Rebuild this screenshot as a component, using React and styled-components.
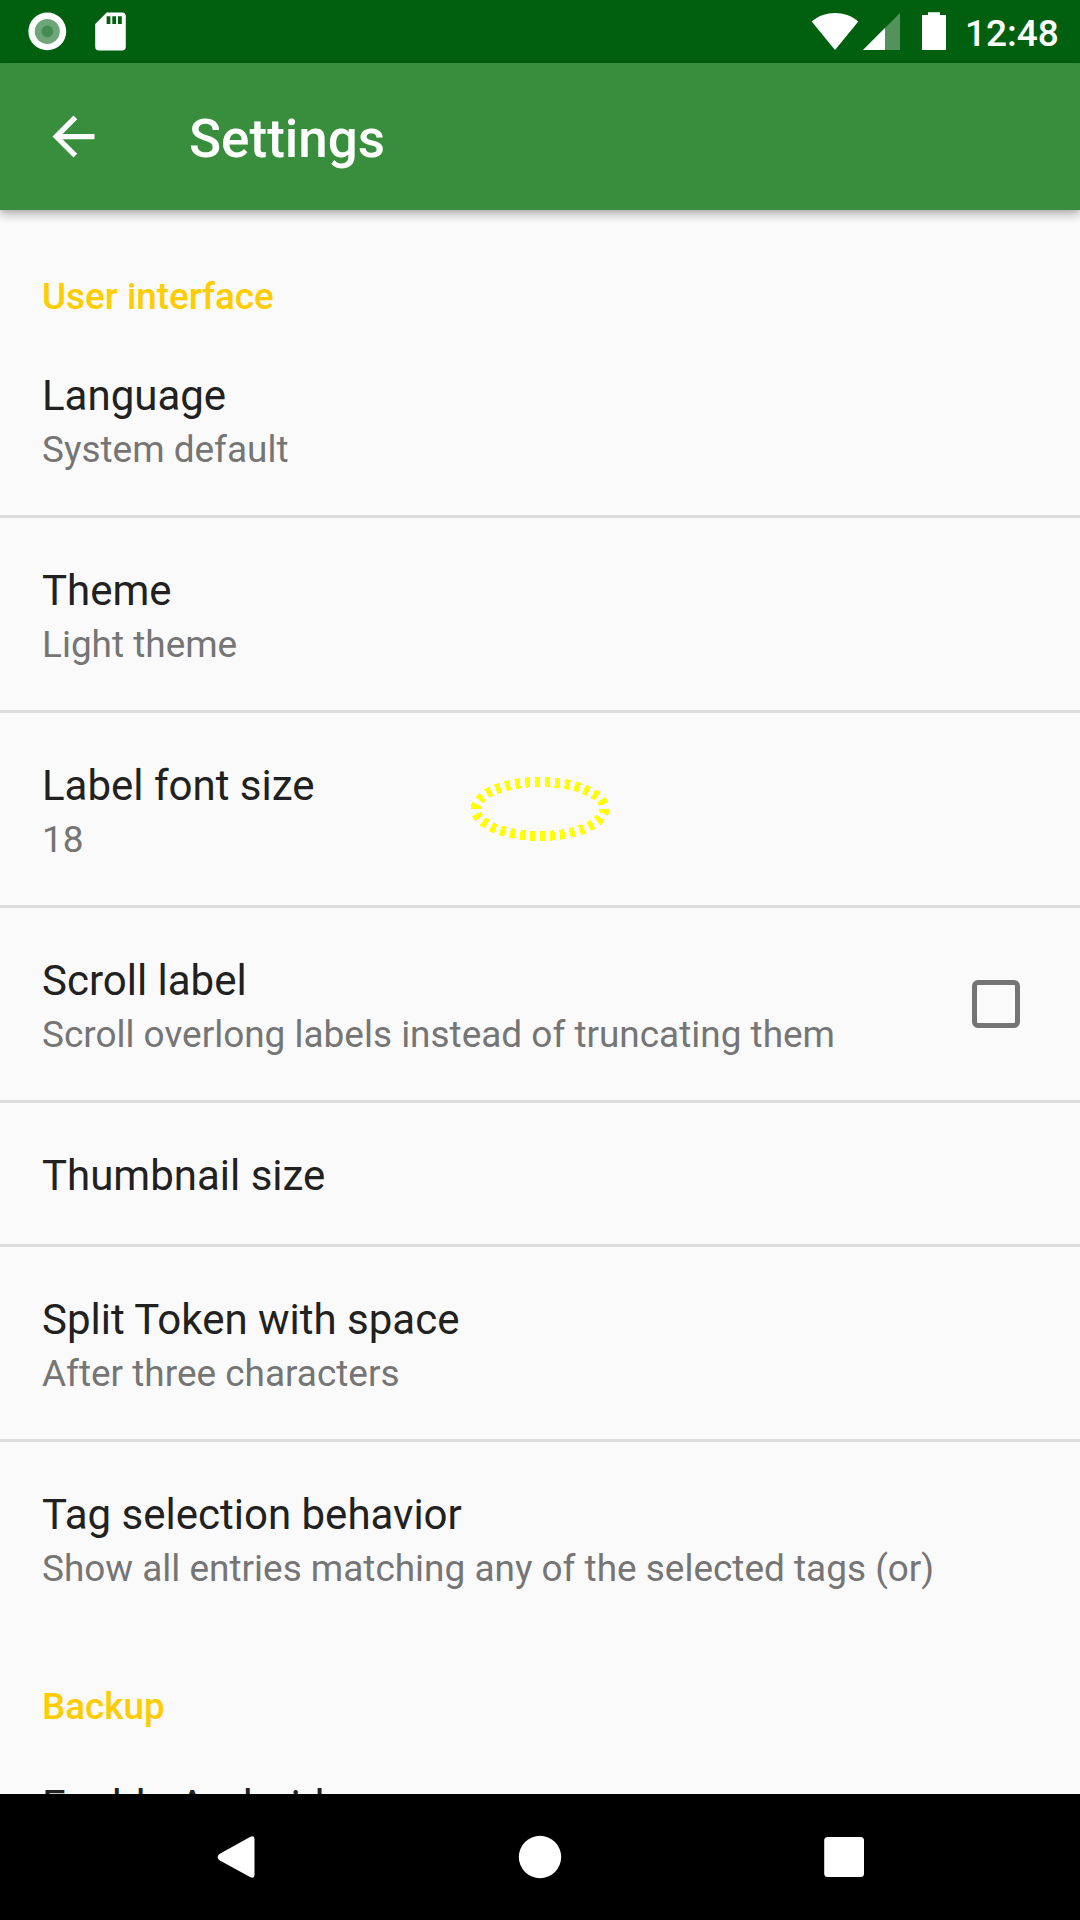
import React from "react";
import styled, { createGlobalStyle } from "styled-components";

const GlobalStyle = createGlobalStyle`
  *, *::before, *::after { box-sizing: border-box; }
  html, body { margin: 0; padding: 0; background: #fafafa; }
`;

const Screen = styled.div`
  position: relative;
  display: flex;
  flex-direction: column;
  width: 1080px;
  height: 1920px;
  overflow: hidden;
  background: #fafafa;
  color: #212121;
  font-family: Roboto, "Noto Sans", sans-serif;
`;

const StatusBar = styled.header`
  display: flex;
  flex: none;
  align-items: flex-start;
  justify-content: space-between;
  height: 63px;
  background: #00600f;
`;

const StatusGroup = styled.div`
  display: flex;
  height: 63px;
`;

const Clock = styled.time`
  width: 115px;
  padding-top: 12px;
  color: #fff;
  font-size: 37px;
  font-weight: 500;
  line-height: 43px;
`;

const Toolbar = styled.div`
  z-index: 1;
  display: flex;
  flex: none;
  align-items: center;
  height: 147px;
  background: #388e3c;
  box-shadow: 0 4px 10px rgba(0, 0, 0, 0.3), 0 2px 4px rgba(0, 0, 0, 0.06);
`;

const BackButton = styled.button`
  display: flex;
  align-items: center;
  justify-content: center;
  width: 147px;
  height: 147px;
  margin: 0 42px 0 0;
  padding: 0;
  border: 0;
  background: none;
`;

const Title = styled.h1`
  margin: 5px 0 0;
  color: #fff;
  font-size: 53px;
  font-weight: 500;
  line-height: 62px;
`;

const Content = styled.main`
  flex: 1;
  min-height: 0;
  overflow: hidden;
`;

const SectionTitle = styled.h2`
  height: 113px;
  margin: 0;
  padding: 65px 42px 0;
  color: #ffcc00;
  font-size: 36.8px;
  font-weight: 500;
  line-height: 43px;
`;

const Row = styled.div`
  display: flex;
  align-items: flex-start;
  justify-content: space-between;
  height: ${(p) => (p.$last ? 178 : p.$single ? 144 : 195)}px;
  padding: 48px 42px 0;
  border-bottom: ${(p) => (p.$last ? "0" : "3px solid #dcdcdc")};
`;

const RowText = styled.div`
  display: flex;
  flex-direction: column;
  gap: 8px;
`;

const RowTitle = styled.div`
  font-size: 42px;
  line-height: 49px;
  white-space: nowrap;
`;

const Summary = styled.div`
  color: #757575;
  font-size: 36.95px;
  line-height: 43px;
  white-space: nowrap;
`;

const Checkbox = styled.span`
  flex: none;
  width: 48px;
  height: 48px;
  margin: 24px 18px 0 0;
  border: 5px solid #757575;
  border-radius: 6px;
`;

const NavBar = styled.nav`
  display: flex;
  flex: none;
  justify-content: space-between;
  height: 126px;
  padding: 0 172px;
  background: #000;
`;

const NavButton = styled.button`
  width: 128px;
  height: 126px;
  padding: 0;
  border: 0;
  background: none;
`;

const TouchMark = styled.svg`
  position: absolute;
  left: 460px;
  top: 769px;
`;

const items = [
  { title: "Language", summary: "System default" },
  { title: "Theme", summary: "Light theme" },
  { title: "Label font size", summary: "18" },
  {
    title: "Scroll label",
    summary: "Scroll overlong labels instead of truncating them",
    checkbox: true,
  },
  { title: "Thumbnail size" },
  { title: "Split Token with space", summary: "After three characters" },
  {
    title: "Tag selection behavior",
    summary: "Show all entries matching any of the selected tags (or)",
  },
];

function Preference({ title, summary, checkbox, last }) {
  return (
    <Row $single={!summary} $last={last}>
      <RowText>
        <RowTitle>{title}</RowTitle>
        {summary && <Summary>{summary}</Summary>}
      </RowText>
      {checkbox && <Checkbox role="checkbox" aria-checked="false" />}
    </Row>
  );
}

export default function App() {
  return (
    <Screen>
      <GlobalStyle />
      <StatusBar>
        <StatusGroup>
          <svg width="140" height="63" viewBox="0 0 140 63">
            <circle cx="47.3" cy="31.4" r="18.9" fill="#fff" />
            <circle cx="47.3" cy="31.4" r="12.5" fill="#6ea679" />
            <circle cx="47.3" cy="31.4" r="5.8" fill="#438b4f" />
            <path
              fill="#fff"
              fillRule="evenodd"
              d="M106.7 12.5H122a3.8 3.8 0 0 1 3.8 3.8V46.7a3.8 3.8 0 0 1-3.8 3.8H99a3.8 3.8 0 0 1-3.8-3.8V24ZM106.6 16.3V24h3.8V16.3ZM112.3 16.3V24h3.8V16.3ZM118 16.3V24h3.8V16.3Z"
            />
          </svg>
        </StatusGroup>
        <StatusGroup>
          <svg width="165" height="63" viewBox="800 0 165 63">
            <path d="M811.7 21.5C825 10.2 845 10.2 858.3 21.5L835 50Z" fill="#fff" />
            <path d="M900 13V50H863Z" fill="#53935b" />
            <path d="M885 28V50H863Z" fill="#fff" />
            <path d="M928 12.3h12V15h6V50H922V15h6Z" fill="#fff" />
          </svg>
          <Clock>12:48</Clock>
        </StatusGroup>
      </StatusBar>

      <Toolbar>
        <BackButton aria-label="Back">
          <svg width="63" height="63" viewBox="0 0 24 24" fill="#fff">
            <path d="M20 11H7.83l5.59-5.59L12 4l-8 8 8 8 1.41-1.41L7.83 13H20v-2z" />
          </svg>
        </BackButton>
        <Title>Settings</Title>
      </Toolbar>

      <Content>
        <SectionTitle>User interface</SectionTitle>
        {items.map((item, i) => (
          <Preference key={item.title} {...item} last={i === items.length - 1} />
        ))}
        <SectionTitle>Backup</SectionTitle>
        <Preference title="Enable Android" last />
      </Content>

      <NavBar>
        <NavButton aria-label="Back">
          <svg width="128" height="126" viewBox="172 1794 128 126">
            <path
              d="M219 1854.2L250 1837Q254.5 1834.8 254.5 1839V1875Q254.5 1879.2 250 1877L219 1860Q216.3 1857 219 1854.2Z"
              fill="#fff"
            />
          </svg>
        </NavButton>
        <NavButton aria-label="Home">
          <svg width="128" height="126" viewBox="476 1794 128 126">
            <circle cx="540" cy="1857" r="21.2" fill="#fff" />
          </svg>
        </NavButton>
        <NavButton aria-label="Overview">
          <svg width="128" height="126" viewBox="780 1794 128 126">
            <rect x="824.2" y="1837" width="39.8" height="40" rx="3.5" fill="#fff" />
          </svg>
        </NavButton>
      </NavBar>

      <TouchMark width="160" height="80" viewBox="0 0 160 80">
        <ellipse
          cx="80"
          cy="40"
          rx="64.5"
          ry="27"
          fill="none"
          stroke="#ffff00"
          strokeWidth="10"
          pathLength="300"
          strokeDasharray="5 5"
          shapeRendering="crispEdges"
        />
      </TouchMark>
    </Screen>
  );
}
